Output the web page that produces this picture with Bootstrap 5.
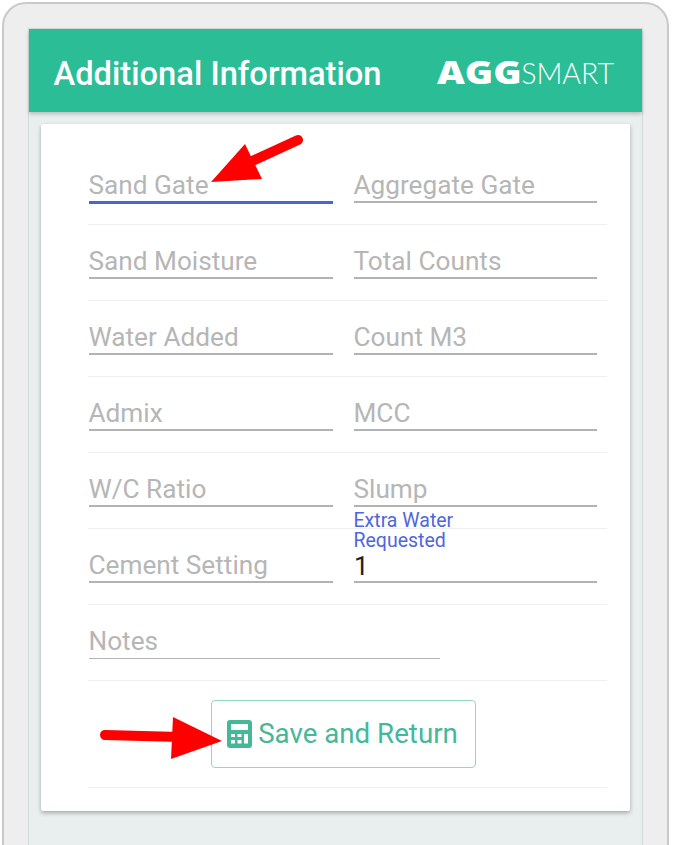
<!DOCTYPE html>
<html lang="en">
<head>
<meta charset="utf-8">
<title>Additional Information</title>
<link href="https://cdn.jsdelivr.net/npm/bootstrap@5.3.0/dist/css/bootstrap.min.css" rel="stylesheet">
<style>
html,body{height:845px;overflow:hidden;background:#fff;}
body{font-family:Roboto,"Liberation Sans",sans-serif;padding:2px 10px 0 2px;}
.device-frame{height:860px;background:#eeeeee;border:2px solid #c9c9c9;border-radius:24px 24px 0 0;padding:25px 25px 0 25px;position:relative;}
.screen-area{height:835px;background:#e9eeee;box-shadow:0 0 0 1px #d5d9d9;}
.app-head{height:83px;background:#2bbd96;box-shadow:0 2px 4px rgba(0,0,0,.22);padding:0 28px 0 24.500px;color:#fff;}
.app-title{font-size:32.7px;font-weight:500;margin:0;line-height:1;padding-top:8px;}
.brand-mark{line-height:1;padding-top:3px;white-space:nowrap;}
.brand-mark b{display:inline-block;font-family:"Open Sans",sans-serif;font-weight:800;font-size:32px;transform:scaleX(1.2);transform-origin:right center;}
.brand-mark span{font-family:Lato,sans-serif;font-weight:300;font-size:28.5px;}
.form-sheet{width:589px;height:687px;margin:12px 0 0 12px;background:#fff;box-shadow:0 2px 4px rgba(0,0,0,.3);padding:25px 23px 0 47px;border-radius:2px;}
.form-line{height:76px;border-bottom:1px solid #f0f0f0;display:grid;grid-template-columns:244px 243px;column-gap:21px;padding-left:1px;align-items:end;padding-bottom:21px;}
.field-box{display:grid;}
.field-box>*{grid-area:1/1;}
.field-input{width:100%;height:36px;align-self:end;border:0;border-bottom:2px solid #b3b3b3;background:transparent;padding:6px 0 0;font-size:26.2px;color:#222;outline:0;border-radius:0;}
.field-input.is-active{height:37px;margin-bottom:-1px;border-bottom:3px solid #4a63d8;}
.field-label{font-size:26.2px;line-height:36px;color:#b6b6b6;align-self:end;margin:0 0 0 -.5px;pointer-events:none;height:36px;}
.field-float{font-size:19.5px;line-height:20px;color:#4f66dd;margin:0 0 0 -.5px;align-self:end;position:relative;top:-32px;height:40px;}
.notes-box{width:351px;}
.notes-box .field-input{border-bottom-width:1px;}
.action-line{height:107px;border-bottom:1px solid #f0f0f0;display:flex;justify-content:center;padding-top:19px;}
.save-btn{width:265px;height:68px;border:1px solid #8fd9c3;border-radius:4px;background:#fff;color:#45b898;font-size:27.7px;padding:0 2px 0 0;display:flex;align-items:center;justify-content:center;gap:6px;margin-right:8px;}
.save-btn:hover{color:#45b898;border-color:#8fd9c3;}
.note-arrow{position:absolute;pointer-events:none;left:0;top:0;}
</style>
</head>
<body>
<div class="device-frame">
  <div class="screen-area">
    <div class="app-head d-flex align-items-center justify-content-between">
      <h1 class="app-title">Additional Information</h1>
      <div class="brand-mark"><b>AGG</b><span>SMART</span></div>
    </div>
    <div class="form-sheet">
      <div class="form-line">
        <div class="field-box"><input class="field-input is-active" id="f1"><label class="field-label" for="f1">Sand Gate</label></div>
        <div class="field-box"><input class="field-input" id="f2"><label class="field-label" for="f2">Aggregate Gate</label></div>
      </div>
      <div class="form-line">
        <div class="field-box"><input class="field-input" id="f3"><label class="field-label" for="f3">Sand Moisture</label></div>
        <div class="field-box"><input class="field-input" id="f4"><label class="field-label" for="f4">Total Counts</label></div>
      </div>
      <div class="form-line">
        <div class="field-box"><input class="field-input" id="f5"><label class="field-label" for="f5">Water Added</label></div>
        <div class="field-box"><input class="field-input" id="f6"><label class="field-label" for="f6">Count M3</label></div>
      </div>
      <div class="form-line">
        <div class="field-box"><input class="field-input" id="f7"><label class="field-label" for="f7">Admix</label></div>
        <div class="field-box"><input class="field-input" id="f8"><label class="field-label" for="f8">MCC</label></div>
      </div>
      <div class="form-line">
        <div class="field-box"><input class="field-input" id="f9"><label class="field-label" for="f9">W/C Ratio</label></div>
        <div class="field-box"><input class="field-input" id="f10"><label class="field-label" for="f10">Slump</label></div>
      </div>
      <div class="form-line">
        <div class="field-box"><input class="field-input" id="f11"><label class="field-label" for="f11">Cement Setting</label></div>
        <div class="field-box"><input class="field-input" id="f12" value="1"><label class="field-float" for="f12">Extra Water<br>Requested</label></div>
      </div>
      <div class="form-line">
        <div class="field-box notes-box"><input class="field-input" id="f13"><label class="field-label" for="f13">Notes</label></div>
      </div>
      <div class="action-line">
        <button class="btn save-btn" type="button">
          <svg width="25" height="28" viewBox="0 0 25 28" aria-hidden="true"><path fill="#45b898" fill-rule="evenodd" d="M3 0H22a3 3 0 0 1 3 3V25a3 3 0 0 1-3 3H3a3 3 0 0 1-3-3V3a3 3 0 0 1 3-3ZM4 4V10H21V4ZM4 14V17H8V14ZM10.500 14V17H14.500V14ZM17 14V23.500H21V14ZM4 20V23.500H8V20ZM10.500 20V23.500H14.500V20Z"/></svg>
          <span>Save and Return</span>
        </button>
      </div>
    </div>
  </div>
</div>
<svg class="note-arrow" width="679" height="845" viewBox="0 0 679 845" aria-hidden="true">
  <line x1="298" y1="140" x2="250" y2="162" stroke="#ff0000" stroke-width="10" stroke-linecap="round"/>
  <polygon points="245,144 262,179 211,182" fill="#ff0000"/>
  <line x1="105" y1="735" x2="180" y2="737" stroke="#ff0000" stroke-width="10" stroke-linecap="round"/>
  <polygon points="173,717 222,741 171,759" fill="#ff0000"/>
</svg>
</body>
</html>
